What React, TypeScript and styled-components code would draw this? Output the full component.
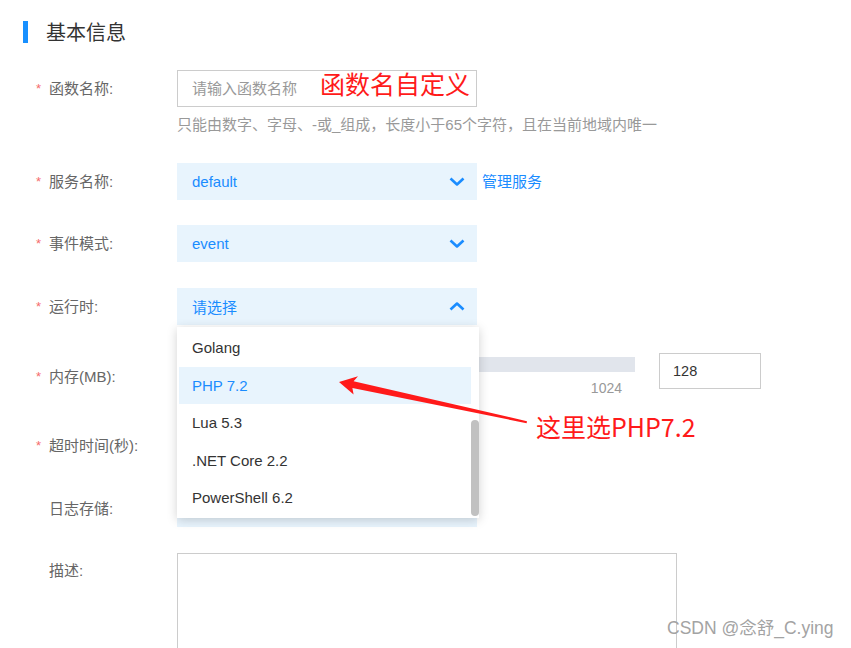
import React from 'react';
import styled, { createGlobalStyle } from 'styled-components';

const GlobalStyle = createGlobalStyle`
  html, body {
    margin: 0;
    background: #fff;
  }
  body {
    font-family: "Liberation Sans", "Noto Sans CJK SC", sans-serif;
  }
`;

const BLUE = '#1a8cff';
const LIGHT = '#e8f4fd';

const RUNTIMES = ['Golang', 'PHP 7.2', 'Lua 5.3', '.NET Core 2.2', 'PowerShell 6.2'];

const Chevron = ({ up }: { up?: boolean }) => (
  <svg width="16" height="9" viewBox="0 0 16 9">
    <polyline
      points={up ? '1.5,7.5 8,1.5 14.5,7.5' : '1.5,1.5 8,7.5 14.5,1.5'}
      fill="none"
      stroke={BLUE}
      strokeWidth="2.6"
      strokeLinejoin="round"
    />
  </svg>
);

export default function App() {
  return (
    <Page>
      <GlobalStyle />
      <SectionTitle>基本信息</SectionTitle>

      <Row $mt={27}>
        <Label>
          <Star>*</Star>函数名称:
        </Label>
        <div>
          <TextInput placeholder="请输入函数名称" />
          <Hint>只能由数字、字母、-或_组成，长度小于65个字符，且在当前地域内唯一</Hint>
        </div>
      </Row>

      <Row $mt={28}>
        <Label>
          <Star>*</Star>服务名称:
        </Label>
        <Inline>
          <Select>
            default
            <Chevron />
          </Select>
          <Link>管理服务</Link>
        </Inline>
      </Row>

      <Row $mt={25}>
        <Label>
          <Star>*</Star>事件模式:
        </Label>
        <Inline>
          <Select>
            event
            <Chevron />
          </Select>
        </Inline>
      </Row>

      <Row $mt={26}>
        <Label>
          <Star>*</Star>运行时:
        </Label>
        <Inline>
          <Select>
            请选择
            <Chevron up />
            <Dropdown>
              <Options>
                {RUNTIMES.map((r) => (
                  <Option key={r} $active={r === 'PHP 7.2'}>
                    {r}
                  </Option>
                ))}
              </Options>
              <ScrollTrack>
                <Thumb />
              </ScrollTrack>
            </Dropdown>
          </Select>
        </Inline>
      </Row>

      <Row $mt={28}>
        <Label $pt={14} $lh={20}>
          <Star>*</Star>内存(MB):
        </Label>
        <Inline>
          <Slider>
            <Track />
            <Marks>1024</Marks>
          </Slider>
          <NumberBox>128</NumberBox>
        </Inline>
      </Row>

      <Row $mt={24}>
        <Label $pt={14} $lh={20}>
          <Star>*</Star>超时时间(秒):
        </Label>
        <Inline>
          <NumberBox $wide />
        </Inline>
      </Row>

      <Row $mt={32}>
        <Label>
          <Star $hidden>*</Star>日志存储:
        </Label>
        <Inline>
          <Select>
            <span />
            <Chevron />
          </Select>
        </Inline>
      </Row>

      <Row $mt={26}>
        <Label $pt={8} $lh={20}>
          <Star $hidden>*</Star>描述:
        </Label>
        <div>
          <TextArea />
        </div>
      </Row>

      <Note $x={320} $y={67}>函数名自定义</Note>
      <Note $x={536} $y={410}>这里选PHP7.2</Note>
      <ArrowLayer width="851" height="648" viewBox="0 0 851 648">
        <polygon
          points="339,382 358,376.3 353.6,381.3 527,421.2 526.6,423.2 352.4,388 353.6,394.6"
          fill="#ff1a1a"
        />
      </ArrowLayer>
      <Watermark>CSDN @念舒_C.ying</Watermark>
    </Page>
  );
}

const Page = styled.div`
  position: relative;
  width: 851px;
  height: 648px;
  overflow: hidden;
  padding-top: 21px;
  box-sizing: border-box;
`;

const SectionTitle = styled.h2`
  margin: 0 0 0 23px;
  padding-left: 18px;
  border-left: 5px solid #1890ff;
  height: 22px;
  line-height: 22px;
  font-size: 20px;
  font-weight: normal;
  color: #333;
  font-family: "Noto Sans CJK SC", sans-serif;
`;

// Form layout
const Row = styled.div<{ $mt: number }>`
  display: grid;
  grid-template-columns: 177px auto;
  margin-top: ${(p) => p.$mt}px;
`;

const Label = styled.div<{ $pt?: number; $lh?: number }>`
  display: flex;
  align-items: flex-start;
  padding-left: 36px;
  padding-top: ${(p) => p.$pt ?? 0}px;
  line-height: ${(p) => p.$lh ?? 37}px;
  font-size: 15px;
  color: #666;
  white-space: nowrap;
`;

const Star = styled.span<{ $hidden?: boolean }>`
  width: 13px;
  color: #f56c6c;
  font-size: 13px;
  visibility: ${(p) => (p.$hidden ? 'hidden' : 'visible')};
`;

const Inline = styled.div`
  display: flex;
  align-items: flex-start;
`;

// Widgets
const TextInput = styled.input`
  display: block;
  width: 300px;
  height: 37px;
  box-sizing: border-box;
  border: 1px solid #ccc;
  padding: 0 0 0 14px;
  margin: 0;
  font-family: inherit;
  font-size: 15px;
  outline: 0;
  &::placeholder {
    color: #999;
  }
`;

const Hint = styled.div`
  margin-top: 8px;
  line-height: 20px;
  font-size: 15px;
  color: #999;
  white-space: nowrap;
`;

const Select = styled.div`
  position: relative;
  display: flex;
  align-items: center;
  justify-content: space-between;
  width: 300px;
  height: 37px;
  box-sizing: border-box;
  padding: 0 12px 0 15px;
  background: ${LIGHT};
  color: ${BLUE};
  font-size: 15px;
`;

const Link = styled.span`
  margin-left: 5px;
  line-height: 37px;
  font-size: 15px;
  color: ${BLUE};
`;

const Dropdown = styled.div`
  position: absolute;
  left: 0;
  top: calc(100% + 2px);
  z-index: 10;
  display: flex;
  width: 302px;
  height: 191px;
  box-sizing: border-box;
  padding: 2px 0 2px 2px;
  background: #fff;
  box-shadow: 0 2px 10px rgba(0, 0, 0, 0.18);
`;

const Options = styled.div`
  flex: 1;
`;

const Option = styled.div<{ $active?: boolean }>`
  height: 37.5px;
  line-height: 37.5px;
  padding-left: 13px;
  font-size: 15px;
  color: ${(p) => (p.$active ? BLUE : '#333')};
  background: ${(p) => (p.$active ? LIGHT : 'transparent')};
`;

const ScrollTrack = styled.div`
  width: 8px;
`;

const Thumb = styled.div`
  margin-top: 91px;
  height: 96px;
  border-radius: 4px;
  background: #c1c1c1;
`;

const Slider = styled.div`
  width: 458px;
`;

const Track = styled.div`
  margin-top: 4px;
  height: 15px;
  background: #e1e5ec;
`;

const Marks = styled.div`
  margin-top: 6px;
  padding-right: 13px;
  text-align: right;
  line-height: 20px;
  font-size: 14px;
  color: #999;
`;

const NumberBox = styled.div<{ $wide?: boolean }>`
  margin-left: ${(p) => (p.$wide ? 0 : 24)}px;
  width: ${(p) => (p.$wide ? 300 : 102)}px;
  height: 36px;
  box-sizing: border-box;
  border: 1px solid #ccc;
  padding-left: 13px;
  line-height: 34px;
  font-size: 14.5px;
  color: #333;
`;

const TextArea = styled.div`
  width: 500px;
  height: 120px;
  box-sizing: border-box;
  border: 1px solid #ccc;
`;

// Annotations drawn over the screenshot
const Note = styled.div<{ $x: number; $y: number }>`
  position: absolute;
  left: ${(p) => p.$x}px;
  top: ${(p) => p.$y}px;
  font-family: "Noto Sans CJK SC", sans-serif;
  font-size: 25px;
  line-height: 32px;
  color: #ff1a1a;
  white-space: nowrap;
`;

const ArrowLayer = styled.svg`
  position: absolute;
  left: 0;
  top: 0;
  pointer-events: none;
  z-index: 20;
`;

const Watermark = styled.div`
  position: absolute;
  left: 667px;
  top: 617px;
  font-size: 17.5px;
  line-height: 22px;
  color: #a3a3a3;
  white-space: nowrap;
`;
